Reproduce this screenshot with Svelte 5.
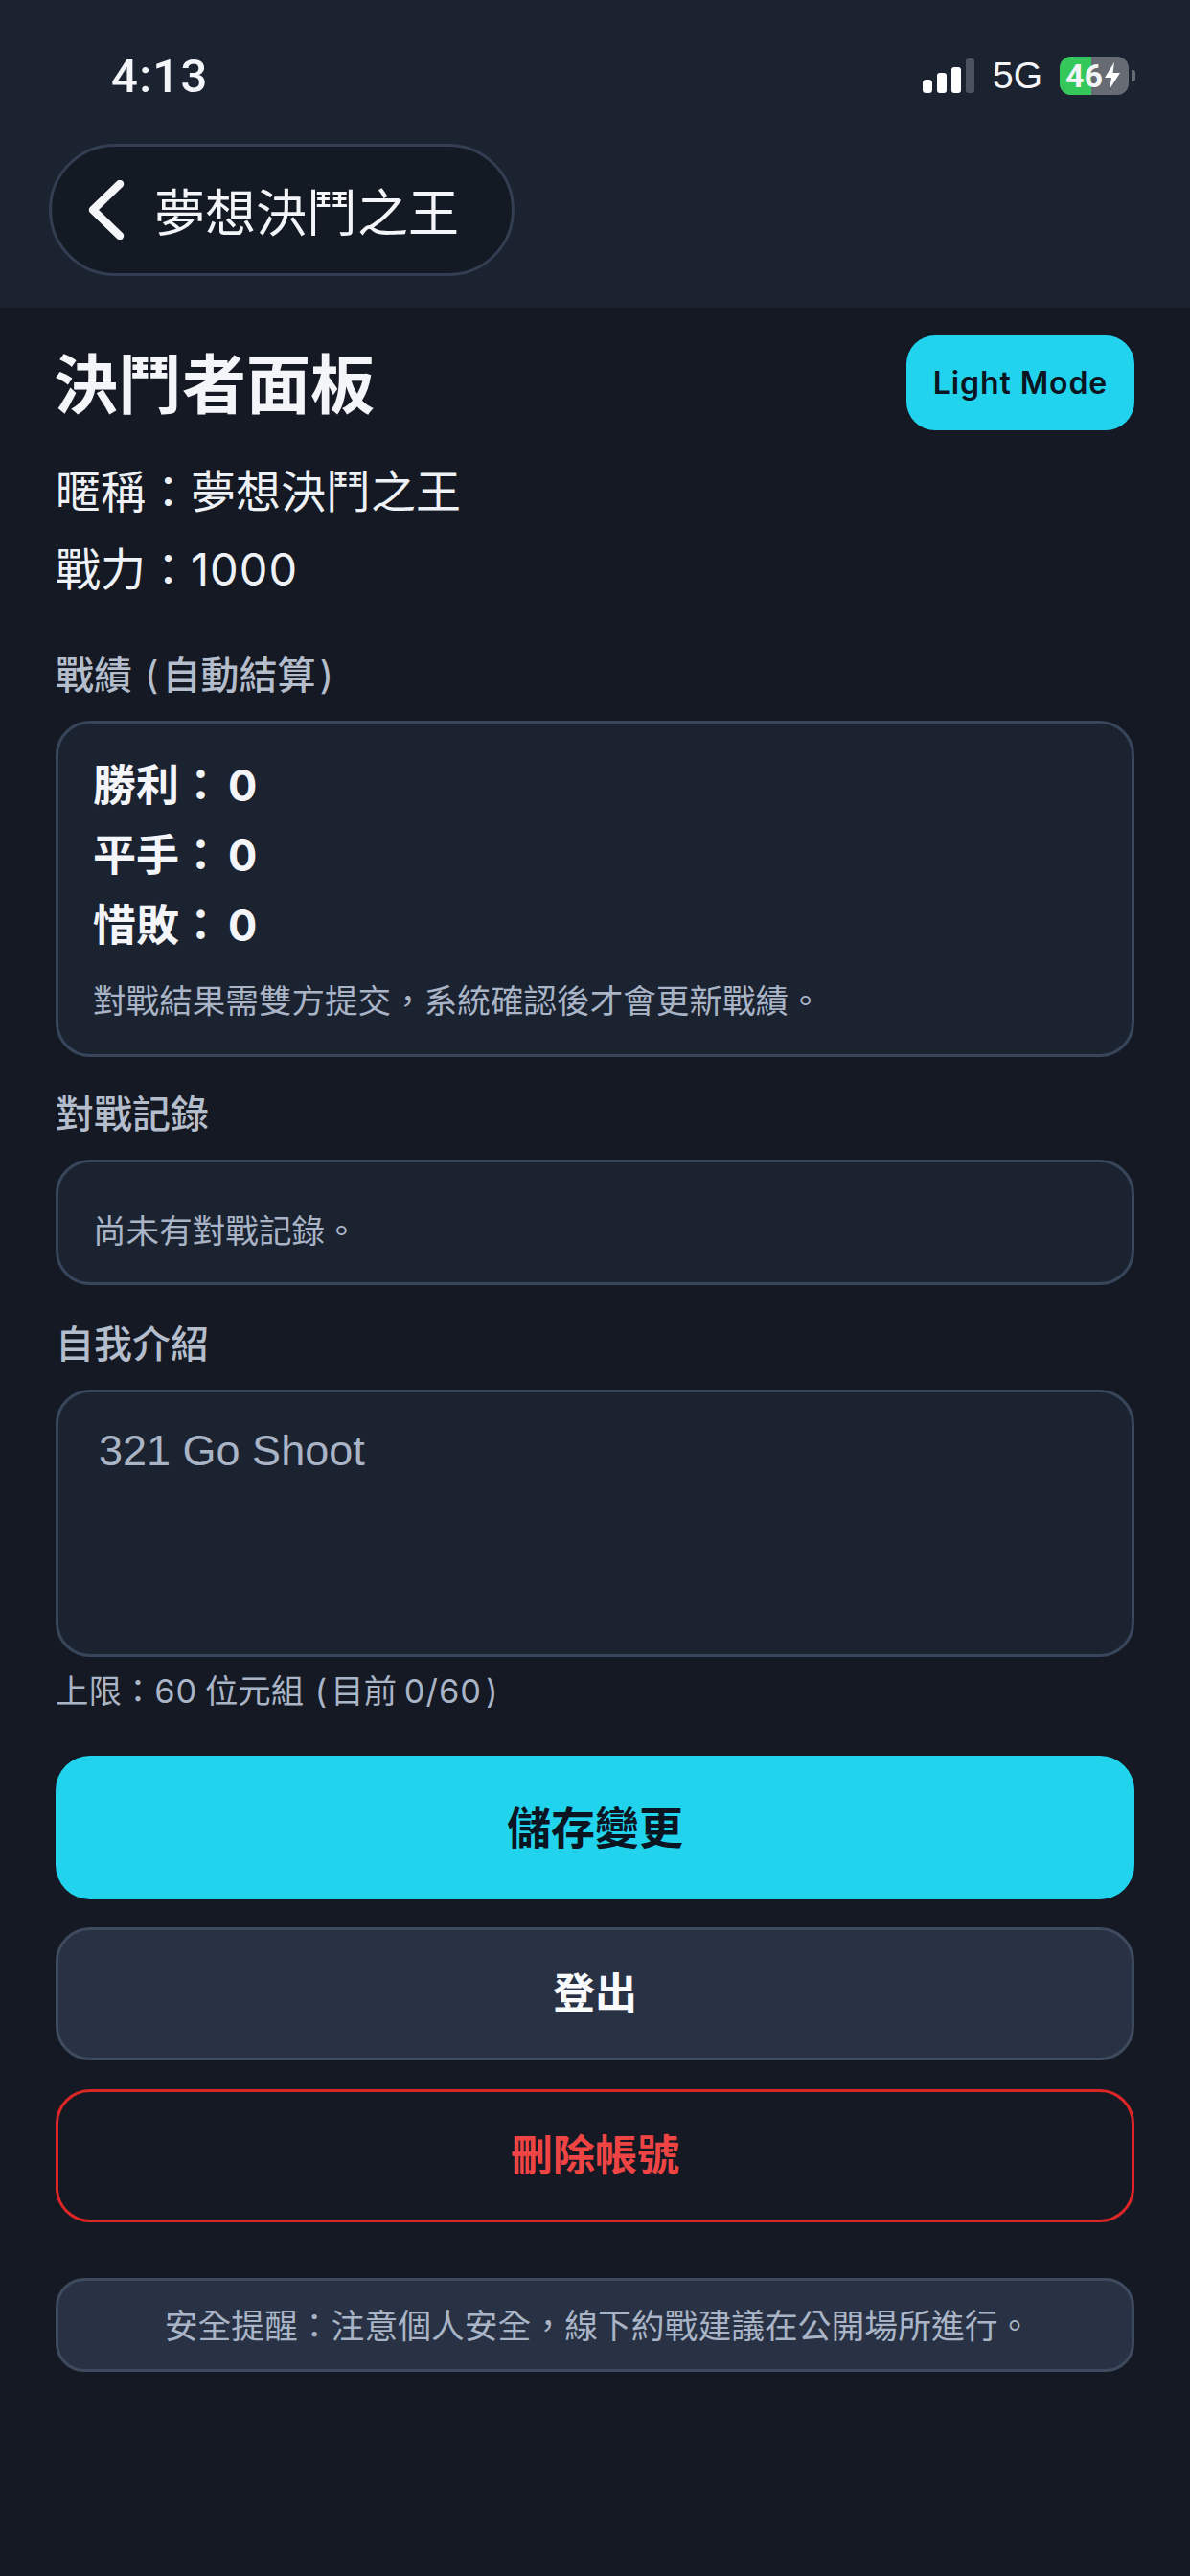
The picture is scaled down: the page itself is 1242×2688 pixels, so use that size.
<script>
  let intro = $state('321 Go Shoot');
  const stats = [
    { label: '勝利', value: 0 },
    { label: '平手', value: 0 },
    { label: '惜敗', value: 0 }
  ];
</script>

<div class="page" lang="zh-Hant">
  <header class="top">
    <div class="status">
      <span class="time">4:13</span>
      <div class="indicators">
        <svg class="signal" width="54" height="36" viewBox="0 0 54 36" aria-hidden="true">
          <rect x="0" y="22" width="10" height="14" rx="3.5" fill="#fff" />
          <rect x="15" y="15" width="10" height="21" rx="3" fill="#fff" />
          <rect x="30" y="9" width="10" height="27" rx="3" fill="#fff" />
          <rect x="45" y="0" width="9" height="36" rx="3" fill="#4b5361" />
        </svg>
        <span class="net">5G</span>
        <div class="battery">
          <div class="fill"></div>
          <span class="pct">46</span>
          <svg class="bolt" width="18" height="28" viewBox="0 0 18 28" aria-hidden="true">
            <path d="M11 0 L1 16 H8 L6 28 L17 11 H9.5 Z" fill="#fff" />
          </svg>
          <div class="cap"></div>
        </div>
      </div>
    </div>
    <button class="back">
      <svg width="38" height="62" viewBox="0 0 38 62" aria-hidden="true">
        <path d="M33 4 L5 31 L33 58" fill="none" stroke="#f3f5f9" stroke-width="8.5" stroke-linecap="round" stroke-linejoin="round" />
      </svg>
      <span>夢想決鬥之王</span>
    </button>
  </header>

  <main class="content">
    <div class="title-row">
      <h1>決鬥者面板</h1>
      <button class="mode">Light Mode</button>
    </div>
    <p class="info">暱稱：夢想決鬥之王</p>
    <p class="info">戰力：<span class="num">1000</span></p>

    <h2 class="label first">戰績 <span class="paren">(</span>自動結算<span class="paren">)</span></h2>
    <section class="card stats">
      {#each stats as s}
        <div class="stat">{s.label}：<span class="num">{s.value}</span></div>
      {/each}
      <p class="note">對戰結果需雙方提交，系統確認後才會更新戰績。</p>
    </section>

    <h2 class="label second">對戰記錄</h2>
    <section class="card history">
      <p class="note">尚未有對戰記錄。</p>
    </section>

    <h2 class="label third">自我介紹</h2>
    <textarea class="card bio" bind:value={intro}></textarea>
    <p class="limit">上限：<span class="num">60</span> 位元組 <span class="paren">(</span>目前 <span class="num">0/60</span><span class="paren">)</span></p>

    <button class="btn save">儲存變更</button>
    <button class="btn logout">登出</button>
    <button class="btn remove">刪除帳號</button>

    <div class="safety">安全提醒：注意個人安全，線下約戰建議在公開場所進行。</div>
  </main>
</div>

<style>
  :global(body) {
    margin: 0;
    background: #141923;
  }
  * {
    box-sizing: border-box;
  }
  .page {
    width: 1242px;
    min-height: 2688px;
    background: #141923;
    color: #f3f5f9;
    font-family: "Noto Sans CJK TC", sans-serif;
  }
  button {
    font-family: inherit;
    cursor: pointer;
  }
  .num {
    font-family: Inter, sans-serif;
    letter-spacing: 1px;
    line-height: 0;
  }
  .paren {
    font-family: Inter, sans-serif;
    font-weight: 400;
    margin: 0 4px;
    line-height: 0;
  }
  .top {
    height: 321px;
    background: #1b2230;
    padding-left: 51px;
  }
  .status {
    height: 150px;
    padding: 8px 57px 0 65px;
    display: flex;
    align-items: center;
    justify-content: space-between;
  }
  .time {
    font-size: 49px;
    font-weight: 500;
    font-family: Roboto, sans-serif;
    letter-spacing: 1.3px;
  }
  .indicators {
    display: flex;
    align-items: center;
  }
  .net {
    margin-left: 19px;
    font-size: 39px;
    font-family: "Liberation Sans", sans-serif;
  }
  .battery {
    position: relative;
    margin-left: 18px;
    margin-right: 7px;
    width: 72px;
    height: 40px;
    border-radius: 12px;
    background: #676c74;
    display: flex;
    align-items: center;
  }
  .fill {
    position: absolute;
    left: 0;
    top: 0;
    bottom: 0;
    width: 33px;
    border-radius: 12px 0 0 12px;
    background: #34c759;
  }
  .pct {
    position: relative;
    margin-left: 6px;
    font-size: 34px;
    font-weight: 700;
    line-height: 40px;
    font-family: Roboto, sans-serif;
  }
  .bolt {
    position: relative;
    margin-left: 1px;
  }
  .cap {
    position: absolute;
    right: -7px;
    top: 14px;
    width: 4px;
    height: 12px;
    border-radius: 0 3px 3px 0;
    background: #676c74;
  }
  .back {
    width: 486px;
    height: 138px;
    border-radius: 69px;
    border: 3px solid #333e52;
    background: #141a24;
    color: #f3f5f9;
    display: flex;
    align-items: center;
    padding: 0 0 0 38px;
  }
  .back span {
    margin-left: 31px;
    font-size: 53px;
    line-height: 60px;
  }
  .content {
    padding: 29px 58px 0;
  }
  .title-row {
    height: 99px;
    display: flex;
    align-items: center;
    justify-content: space-between;
  }
  h1 {
    margin: 0 0 6px -2px;
    font-size: 67px;
    line-height: 80px;
    font-weight: 700;
  }
  .mode {
    width: 238px;
    height: 99px;
    border: 0;
    border-radius: 30px;
    background: #22d3ee;
    color: #0b1522;
    font-family: Inter, sans-serif;
    font-size: 32px;
    font-weight: 600;
    letter-spacing: 0.9px;
  }
  .info {
    margin: 0;
    font-size: 47px;
    line-height: 75px;
    padding-bottom: 6px;
    color: #eef1f6;
  }
  .info:first-of-type {
    margin-top: 23px;
  }
  .label {
    margin: 0;
    font-size: 40px;
    font-weight: 500;
    line-height: 50px;
    padding-bottom: 6px;
    color: #b4bdcc;
  }
  .first {
    margin-top: 43px;
  }
  .second {
    margin-top: 32px;
  }
  .third {
    margin-top: 34px;
  }
  .card {
    display: block;
    width: 100%;
    margin-top: 19px;
    border: 3px solid #38465c;
    border-radius: 36px;
    background: #1b2331;
  }
  .stats {
    height: 351px;
    padding: 25px 36px 0;
  }
  .stat {
    font-size: 45px;
    font-weight: 700;
    line-height: 73px;
  }
  .stat .num {
    margin-left: 6px;
  }
  .note {
    margin: 18px 0 0;
    font-size: 34.6px;
    line-height: 50px;
    color: #a9b4c6;
  }
  .history {
    height: 131px;
    padding: 26px 36px 0;
  }
  .bio {
    height: 279px;
    padding: 36px 42px;
    resize: none;
    outline: none;
    color: #a9b4c6;
    font-size: 45px;
    line-height: 50px;
    font-family: "Liberation Sans", sans-serif;
  }
  .limit {
    margin: 8px 0 0;
    font-size: 34.4px;
    line-height: 50px;
    color: #a9b4c6;
  }
  .btn {
    display: block;
    width: 100%;
    font-size: 44px;
    line-height: 60px;
    font-weight: 700;
    border-radius: 36px;
    padding: 0 0 7px;
  }
  .save {
    margin-top: 45px;
    height: 150px;
    border: 0;
    font-size: 46px;
    background: #22d3ee;
    color: #0b1522;
  }
  .logout {
    margin-top: 29px;
    height: 139px;
    border: 3px solid #3e4a5e;
    background: #283244;
    color: #f8fafc;
  }
  .remove {
    margin-top: 30px;
    height: 139px;
    border: 3px solid #dc2626;
    background: transparent;
    color: #ef4444;
  }
  .safety {
    margin-top: 58px;
    height: 98px;
    padding: 0 0 3px 6px;
    border: 3px solid #3e4a5e;
    border-radius: 30px;
    background: #283244;
    color: #a9b4c6;
    font-size: 34.8px;
    display: flex;
    align-items: center;
    justify-content: center;
  }
</style>
